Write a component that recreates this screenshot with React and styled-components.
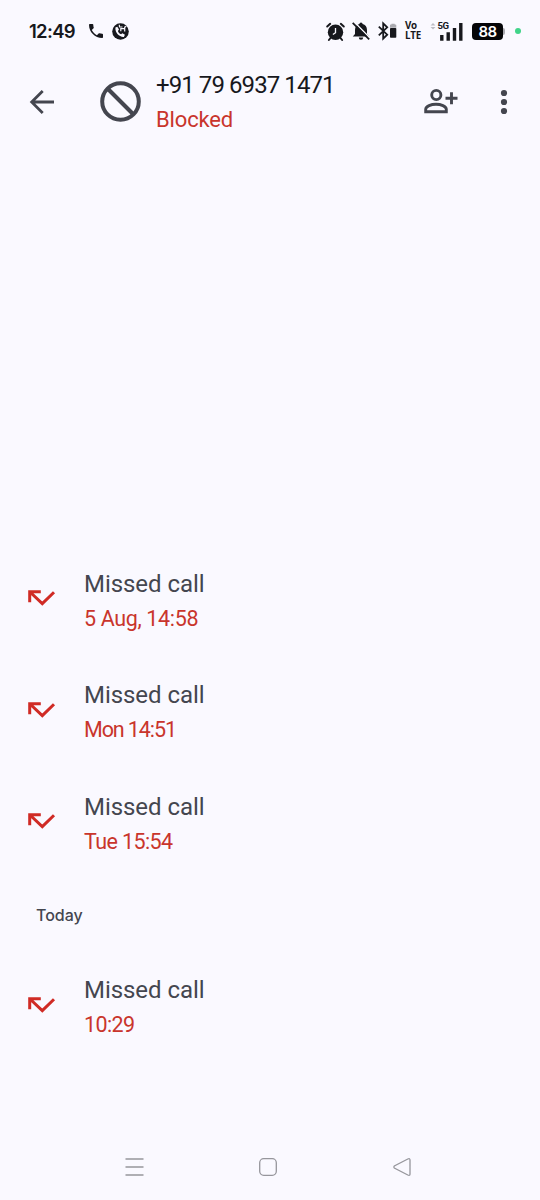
import React from 'react';
import styled, { createGlobalStyle } from 'styled-components';

const colors = {
  background: '#faf9ff',
  black: '#17181d',
  gray: '#44464f',
  red: '#c9352c',
  nav: '#96969c',
  green: '#40d489',
};

const GlobalStyle = createGlobalStyle`
  body {
    margin: 0;
    background-color: ${colors.background};
  }
  * {
    box-sizing: border-box;
  }
`;

const Screen = styled.div`
  display: flex;
  flex-flow: column nowrap;
  width: 540px;
  height: 1200px;
  overflow: hidden;
  background-color: ${colors.background};
  font-family: Roboto, 'Liberation Sans', sans-serif;
`;

const StatusBar = styled.div`
  display: flex;
  justify-content: space-between;
  align-items: center;
  height: 62px;
  padding: 0 19px 0 29px;
  color: ${colors.black};
`;

const StatusGroup = styled.div`
  display: flex;
  align-items: center;
`;

const Clock = styled.span`
  width: 60px;
  font-family: Inter, sans-serif;
  font-size: 18.5px;
  font-weight: 600;
  line-height: 22px;
  letter-spacing: -0.7px;
  white-space: nowrap;
`;

const Icon = styled.svg`
  display: block;
  flex: none;
  margin-left: ${(props) => props.$gap || 0}px;
  overflow: visible;
  fill: none;
  stroke: currentColor;
  stroke-width: ${(props) => props.$line || 0};
`;

const AppBar = styled.header`
  display: grid;
  grid-template-columns: 70px 86px 1fr 64px 52px;
  align-items: center;
  height: 79px;
  color: ${colors.gray};
`;

const IconButton = styled.button`
  display: flex;
  justify-content: flex-start;
  align-items: center;
  height: 48px;
  padding: 0 0 0 ${(props) => props.$inset || 0}px;
  border: 0;
  background: none;
  color: inherit;
`;

const Contact = styled.div`
  display: flex;
  flex-flow: column nowrap;
  gap: 7px;
  padding-top: 1px;
`;

const Label = styled.span`
  font-family: ${(props) => props.$font || 'inherit'};
  font-size: ${(props) => props.$size || 24}px;
  font-weight: ${(props) => props.$weight || 400};
  line-height: 28px;
  letter-spacing: ${(props) => props.$spacing || 0}px;
  white-space: nowrap;
  color: ${(props) => props.$color || colors.gray};
`;

const History = styled.main`
  display: flex;
  flex: 1;
  flex-flow: column nowrap;
  justify-content: flex-end;
  padding-bottom: 70.5px;
`;

const CallRow = styled.div`
  display: grid;
  grid-template-columns: 28px 56px 1fr;
  align-items: center;
  height: 111.5px;
`;

const CallIcon = styled.div`
  grid-column: 2;
  padding-bottom: 6px;
  color: #d02b25;
`;

const CallText = styled.div`
  display: flex;
  flex-flow: column nowrap;
  gap: 7px;
`;

const DayHeader = styled.div`
  display: flex;
  align-items: center;
  height: 72px;
  padding: 0 36px 3px;
`;

const NavigationBar = styled.nav`
  display: flex;
  justify-content: space-between;
  align-items: center;
  height: 66px;
  padding: 0 129.5px 0 125px;
  color: ${colors.nav};
`;

const calls = [
  { time: '5 Aug, 14:58', spacing: -0.35 },
  { time: 'Mon 14:51', spacing: -1.1 },
  { time: 'Tue 15:54', spacing: -0.6 },
];

const PhoneIcon = () => (
  <Icon width="14" height="14" viewBox="3 3 18 18">
    <path
      fill="currentColor"
      d="M6.6 10.8c1.4 2.8 3.8 5.1 6.6 6.6l2.2-2.2c.3-.3.7-.4 1-.2 1.1.4 2.3.6 3.6.6.6 0 1 .4 1 1V20c0 .6-.4 1-1 1C10.6 21 3 13.4 3 4c0-.6.5-1 1-1h3.5c.6 0 1 .5 1 1 0 1.3.2 2.5.6 3.6.1.3 0 .7-.3 1z"
    />
  </Icon>
);

const CallBadgeIcon = () => (
  <Icon width="17" height="17" viewBox="0 0 17 17" $gap={8.5}>
    <circle cx="8.5" cy="8.5" r="8.3" fill="currentColor" />
    <path
      fill={colors.background}
      d="M3.4 4.6l1.9-.9 1.7 2.9-1.100 1.300c.4 1.600 1.500 2.800 3.200 3.300l1.300-1 2.500 1.500-1 2.200C7.600 14.300 3 10.200 3.400 4.600z"
    />
    <path
      stroke={colors.background}
      strokeWidth="1.2"
      d="M7.3 1.8l.2 2.200h3M8.800 8.300V5.700h3.400M12.700 8.500V4.200l1.600-1"
    />
  </Icon>
);

const AlarmIcon = () => (
  <Icon width="19" height="19" viewBox="0 0 19 19">
    <circle cx="9.5" cy="10.2" r="7.7" fill="currentColor" />
    <path
      strokeWidth="2"
      strokeLinecap="round"
      d="M1.2 4.500l3-2.700M17.800 4.500l-3-2.700M4.500 16l-1.600 2M14.500 16l1.600 2"
    />
    <path stroke={colors.background} strokeWidth="1.3" d="M9.5 6v4.700l-2.600 1.900" />
  </Icon>
);

const BellOffIcon = () => (
  <Icon width="18" height="18" viewBox="0 0 18 18" $gap={7}>
    <path
      fill="currentColor"
      d="M.8 14.500l2.200-2.400V8C3 4.800 4.800 2.700 7.400 2.100a1.600 1.600 0 0 1 3.200 0C13.300 2.700 15 4.800 15 8v4.100l2.200 2.400zM6.800 15.600h4.400a2.200 2.200 0 0 1-4.400 0z"
    />
    <path stroke={colors.background} strokeWidth="1.4" d="M2.3 0L18 15.900" />
    <path strokeWidth="1.8" d="M.7.8L17.200 17.300" />
  </Icon>
);

const BluetoothIcon = () => (
  <Icon width="18" height="18" viewBox="0 0 18 18" $gap={8}>
    <path strokeWidth="1.8" d="M.8 4.700l8.400 8L5.200 16.600V1.400l4 3.900-8.400 8" />
    <rect x="12" y="6" width="6.3" height="9.8" rx=".8" fill="currentColor" />
    <path fill="#aaaab0" d="M12 5.800V3.200q0-.7.700-.7h.8v-.7h3.200v.7h.8q.8 0 .8.700v2.600z" />
  </Icon>
);

const VolteBadge = styled.div`
  display: flex;
  flex-flow: column nowrap;
  width: 17px;
  margin-left: 9px;
  font-family: 'Open Sans', sans-serif;
  font-size: 9.8px;
  font-weight: 700;
  line-height: 10px;
  letter-spacing: -0.25px;
`;

const SignalIcon = () => (
  <Icon width="34" height="20" viewBox="0 0 34 20" $gap={8}>
    <path fill="#bcbcc4" d="M.5 4.500L3 2l2.500 2.500zM.5 6L3 8.500 5.500 6z" />
    <text
      x="7.5"
      y="8.400"
      fill="currentColor"
      fontFamily="Roboto, sans-serif"
      fontSize="9.6"
      fontWeight="700"
      letterSpacing="-.5"
    >
      5G
    </text>
    <path strokeWidth="3.4" d="M11.8 14v5.700M18.200 11.300v8.400M24.500 7v12.700M30.800 2v17.700" />
  </Icon>
);

const Battery = styled.div`
  display: flex;
  justify-content: center;
  align-items: center;
  width: 31px;
  height: 17px;
  margin-left: 8px;
  border-radius: 4px;
  background-color: #050507;
  color: #ffffff;
  font-family: Inter, sans-serif;
  font-size: 15px;
  font-weight: 600;
  line-height: 17px;
  letter-spacing: -0.5px;
`;

const BatteryTip = styled.div`
  width: 2px;
  height: 7px;
  border-radius: 0 2px 2px 0;
  background-color: #aaaab0;
`;

const PrivacyDot = styled.div`
  width: 6px;
  height: 6px;
  margin-left: 10px;
  border-radius: 50%;
  background-color: ${colors.green};
`;

const MissedIcon = () => (
  <Icon width="28" height="16" viewBox="0 0 28 16" $line={3}>
    <path d="M1.700 12.300V1.700H12.800M2 2l12.300 11.600L26 2.200" />
  </Icon>
);

const Call = ({ time, spacing }) => (
  <CallRow>
    <CallIcon>
      <MissedIcon />
    </CallIcon>
    <CallText>
      <Label $spacing={-0.05}>Missed call</Label>
      <Label $size={21.5} $spacing={spacing} $color={colors.red}>
        {time}
      </Label>
    </CallText>
  </CallRow>
);

const App = () => (
  <>
    <GlobalStyle />
    <Screen>
      <StatusBar>
        <StatusGroup>
          <Clock>12:49</Clock>
          <PhoneIcon />
          <CallBadgeIcon />
        </StatusGroup>
        <StatusGroup>
          <AlarmIcon />
          <BellOffIcon />
          <BluetoothIcon />
          <VolteBadge>
            <span>Vo</span>
            <span>LTE</span>
          </VolteBadge>
          <SignalIcon />
          <Battery>88</Battery>
          <BatteryTip />
          <PrivacyDot />
        </StatusGroup>
      </StatusBar>

      <AppBar>
        <IconButton $inset={30} aria-label="Back">
          <Icon width="24" height="24" viewBox="0 0 24 24" $line={2.8}>
            <path d="M24 12H2M12.7 1L1.700 12l11 11" />
          </Icon>
        </IconButton>
        <IconButton $inset={29.5} aria-label="Blocked contact">
          <Icon width="41" height="41" viewBox="0 0 41 41" $line={4}>
            <circle cx="20.5" cy="20.5" r="18.3" />
            <path d="M7.5 7.500l26 26" />
          </Icon>
        </IconButton>
        <Contact>
          <Label $spacing={-0.92} $color={colors.black}>
            +91 79 6937 1471
          </Label>
          <Label $size={22} $spacing={-0.15} $color={colors.red}>
            Blocked
          </Label>
        </Contact>
        <IconButton aria-label="Add contact">
          <Icon width="34" height="25" viewBox="0 0 34 25" $line={2.9}>
            <circle cx="12.3" cy="6" r="4.6" />
            <path d="M1.7 22.700v-2.500c0-3 5.500-5 10.300-5s10.300 2 10.300 5v2.500zM27.500 3.200v12M21.500 9.200h12" />
          </Icon>
        </IconButton>
        <IconButton $inset={13} aria-label="More options">
          <Icon width="6" height="24" viewBox="0 0 6 24">
            <g fill="currentColor">
              <circle cx="3" cy="3" r="3.1" />
              <circle cx="3" cy="12" r="3.1" />
              <circle cx="3" cy="21" r="3.1" />
            </g>
          </Icon>
        </IconButton>
      </AppBar>

      <History>
        {calls.map((call) => (
          <Call key={call.time} {...call} />
        ))}
        <DayHeader>
          <Label $font="Inter, sans-serif" $size={16} $weight={500} $spacing={0}>
            Today
          </Label>
        </DayHeader>
        <Call time="10:29" spacing={-0.6} />
      </History>

      <NavigationBar>
        <Icon width="19" height="18" viewBox="0 0 19 18" $line={1.4}>
          <path d="M.5 1h18M.5 9h18M.5 17h18" />
        </Icon>
        <Icon width="18" height="18" viewBox="0 0 18 18" $line={1.3}>
          <rect x=".7" y=".7" width="16.6" height="16.6" rx="4" />
        </Icon>
        <Icon width="18" height="18" viewBox="0 0 18 18" $line={1.3}>
          <path d="M1.3 8q-1 1 0 2l13.500 7q2.200 1 2.200-1V2q0-2-2.200-1z" />
        </Icon>
      </NavigationBar>
    </Screen>
  </>
);

export default App;
